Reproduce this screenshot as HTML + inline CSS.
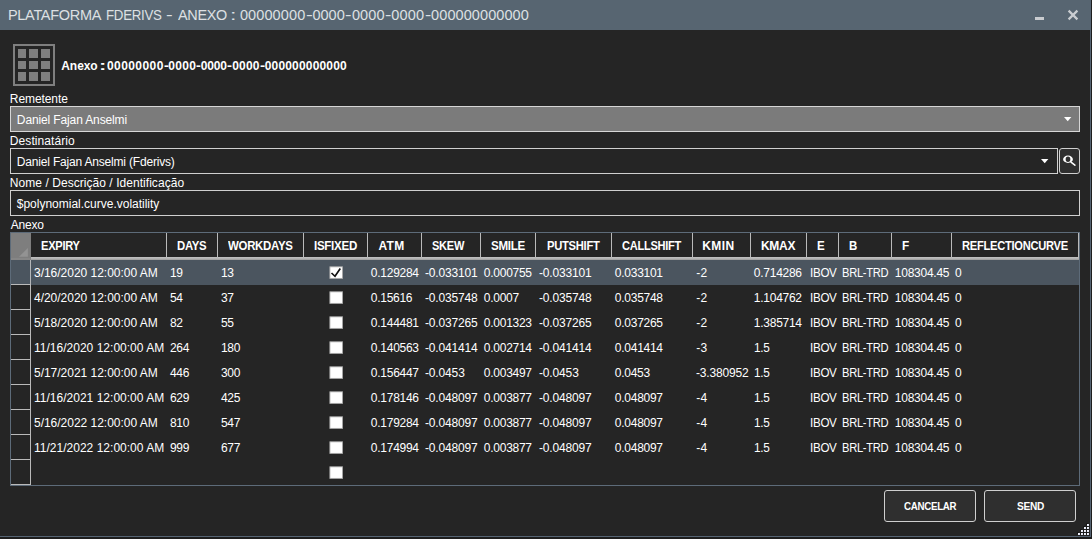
<!DOCTYPE html>
<html><head><meta charset="utf-8"><title>Plataforma FDerivs - Anexo</title>
<style>
html,body{margin:0;padding:0;background:#252525;}
body{width:1092px;height:539px;position:relative;overflow:hidden;font-family:"Liberation Sans",sans-serif;}
.t{position:absolute;white-space:pre;line-height:normal;font-family:"Liberation Sans",sans-serif;}
</style></head>
<body>
<div style="position:absolute;left:0px;top:0px;width:1092px;height:539px;background:#252525;"></div>
<div style="position:absolute;left:0px;top:0px;width:1090px;height:30px;background:#576571;"></div>
<div style="position:absolute;left:1090px;top:0px;width:1px;height:537px;background:#566473;"></div>
<div style="position:absolute;left:0px;top:536px;width:1091px;height:1px;background:#566473;"></div>
<div style="position:absolute;left:1091px;top:0px;width:1px;height:539px;background:#1e1e1e;"></div>
<div style="position:absolute;left:0px;top:537px;width:1092px;height:2px;background:#1e1e1e;"></div>
<span class="t" style="left:7.66px;top:7.00px;font-size:14.5px;letter-spacing:-0.300px;color:#dde0e3;transform:scaleX(0.9987);transform-origin:0 0;">PLATAFORMA</span>
<span class="t" style="left:106.16px;top:7.00px;font-size:14.5px;letter-spacing:-0.300px;color:#dde0e3;transform:scaleX(0.9157);transform-origin:0 0;">FDERIVS</span>
<span class="t" style="left:166.36px;top:7.00px;font-size:14.5px;letter-spacing:0.000px;color:#dde0e3;transform:scaleX(1.378);transform-origin:0 0;">-</span>
<span class="t" style="left:177.92px;top:7.00px;font-size:14.5px;letter-spacing:-0.300px;color:#dde0e3;transform:scaleX(0.9930);transform-origin:0 0;">ANEXO</span>
<span class="t" style="left:230.34px;top:7.00px;font-size:14.5px;letter-spacing:0.000px;color:#dde0e3;transform:scaleX(1.590);transform-origin:0 0;">:</span>
<span class="t" style="left:239.88px;top:7.00px;font-size:14.5px;letter-spacing:0.117px;color:#dde0e3;">00000000</span>
<span class="t" style="left:305.74px;top:7.00px;font-size:14.5px;letter-spacing:0.000px;color:#dde0e3;transform:scaleX(1.406);transform-origin:0 0;">-</span>
<span class="t" style="left:312.38px;top:7.00px;font-size:14.5px;letter-spacing:0.022px;color:#dde0e3;">0000</span>
<span class="t" style="left:345.38px;top:7.00px;font-size:14.5px;letter-spacing:0.000px;color:#dde0e3;transform:scaleX(1.350);transform-origin:0 0;">-</span>
<span class="t" style="left:351.88px;top:7.00px;font-size:14.5px;letter-spacing:0.156px;color:#dde0e3;">0000</span>
<span class="t" style="left:384.90px;top:7.00px;font-size:14.5px;letter-spacing:0.000px;color:#dde0e3;transform:scaleX(1.322);transform-origin:0 0;">-</span>
<span class="t" style="left:391.28px;top:7.00px;font-size:14.5px;letter-spacing:0.156px;color:#dde0e3;">0000</span>
<span class="t" style="left:424.62px;top:7.00px;font-size:14.5px;letter-spacing:0.000px;color:#dde0e3;transform:scaleX(1.294);transform-origin:0 0;">-</span>
<span class="t" style="left:431.08px;top:7.00px;font-size:14.5px;letter-spacing:0.087px;color:#dde0e3;">000000000000</span>
<div style="position:absolute;left:1035px;top:17px;width:9px;height:3px;background:#c9ccd0;"></div>
<svg style="position:absolute;left:1066px;top:8px" width="14" height="14" viewBox="0 0 14 14"><path d="M2.6 2.6 L11.4 11.4 M11.4 2.6 L2.6 11.4" stroke="#c9cdd1" stroke-width="2.2" fill="none"/></svg>
<div style="position:absolute;left:13px;top:44px;width:42px;height:42px;box-sizing:border-box;border:2px solid #7f7f7f;"></div>
<div style="position:absolute;left:18px;top:49px;width:8px;height:9px;background:#7f7f7f;"></div>
<div style="position:absolute;left:18px;top:61px;width:8px;height:8px;background:#7f7f7f;"></div>
<div style="position:absolute;left:18px;top:72px;width:8px;height:9px;background:#7f7f7f;"></div>
<div style="position:absolute;left:29px;top:49px;width:9px;height:9px;background:#7f7f7f;"></div>
<div style="position:absolute;left:29px;top:61px;width:9px;height:8px;background:#7f7f7f;"></div>
<div style="position:absolute;left:29px;top:72px;width:9px;height:9px;background:#7f7f7f;"></div>
<div style="position:absolute;left:41px;top:49px;width:9px;height:9px;background:#7f7f7f;"></div>
<div style="position:absolute;left:41px;top:61px;width:9px;height:8px;background:#7f7f7f;"></div>
<div style="position:absolute;left:41px;top:72px;width:9px;height:9px;background:#7f7f7f;"></div>
<span class="t" style="left:61.25px;top:59.00px;font-size:12px;letter-spacing:-0.055px;color:#fff;font-weight:bold;">Anexo</span>
<span class="t" style="left:98.83px;top:59.00px;font-size:12px;letter-spacing:0.000px;color:#fff;font-weight:bold;transform:scaleX(1.833);transform-origin:0 0;">:</span>
<span class="t" style="left:106.98px;top:59.00px;font-size:12px;letter-spacing:0.425px;color:#fff;font-weight:bold;">00000000</span>
<span class="t" style="left:163.58px;top:59.00px;font-size:12px;letter-spacing:0.000px;color:#fff;font-weight:bold;transform:scaleX(1.213);transform-origin:0 0;">-</span>
<span class="t" style="left:168.28px;top:59.00px;font-size:12px;letter-spacing:0.288px;color:#fff;font-weight:bold;">0000</span>
<span class="t" style="left:196.20px;top:59.00px;font-size:12px;letter-spacing:0.000px;color:#fff;font-weight:bold;transform:scaleX(1.180);transform-origin:0 0;">-</span>
<span class="t" style="left:200.78px;top:59.00px;font-size:12px;letter-spacing:-0.179px;color:#fff;font-weight:bold;">0000</span>
<span class="t" style="left:227.27px;top:59.00px;font-size:12px;letter-spacing:0.000px;color:#fff;font-weight:bold;transform:scaleX(1.246);transform-origin:0 0;">-</span>
<span class="t" style="left:232.18px;top:59.00px;font-size:12px;letter-spacing:0.221px;color:#fff;font-weight:bold;">0000</span>
<span class="t" style="left:259.75px;top:59.00px;font-size:12px;letter-spacing:0.000px;color:#fff;font-weight:bold;transform:scaleX(1.278);transform-origin:0 0;">-</span>
<span class="t" style="left:264.68px;top:59.00px;font-size:12px;letter-spacing:0.179px;color:#fff;font-weight:bold;">000000000000</span>
<span class="t" style="left:9.87px;top:91.50px;font-size:12px;letter-spacing:-0.086px;color:#fff;">Remetente</span>
<div style="position:absolute;left:10px;top:106px;width:1070px;height:26px;box-sizing:border-box;border:1px solid #d6d6d6;background:#7b7b7b;"></div>
<span class="t" style="left:16.87px;top:112.75px;font-size:12px;letter-spacing:-0.128px;color:#fff;">Daniel Fajan Anselmi</span>
<svg style="position:absolute;left:1064px;top:117px" width="8" height="5" viewBox="0 0 8 5"><path d="M0 0 H7.4 L3.7 4.2 Z" fill="#fff"/></svg>
<span class="t" style="left:9.87px;top:133.75px;font-size:12px;letter-spacing:0.064px;color:#fff;">Destinatário</span>
<div style="position:absolute;left:10px;top:148px;width:1048px;height:26px;box-sizing:border-box;border:1px solid #d0d0d0;background:#252525;"></div>
<span class="t" style="left:16.87px;top:155.00px;font-size:12px;letter-spacing:-0.187px;color:#fff;">Daniel Fajan Anselmi (Fderivs)</span>
<svg style="position:absolute;left:1041px;top:159px" width="8" height="5" viewBox="0 0 8 5"><path d="M0 0 H7.4 L3.7 4.2 Z" fill="#fff"/></svg>
<div style="position:absolute;left:1059px;top:148px;width:21px;height:26px;box-sizing:border-box;border:1px solid #d0d0d0;border-radius:3px;background:#2f2f2f;"></div>
<svg style="position:absolute;left:1061px;top:153px" width="18" height="18" viewBox="0 0 18 18"><path fill-rule="evenodd" fill="#fff" d="M2.1 6.25 a4.9 3.7 0 1 0 9.8 0 a4.9 3.7 0 1 0 -9.8 0 Z M4.65 6.3 a2.35 2.7 0 1 0 4.7 0 a2.35 2.7 0 1 0 -4.7 0 Z"/><path d="M10.0 9.1 L13.9 12.2" stroke="#fff" stroke-width="1.5" stroke-linecap="round"/></svg>
<span class="t" style="left:9.87px;top:176.00px;font-size:12px;letter-spacing:0.048px;color:#fff;">Nome / Descrição / Identificação</span>
<div style="position:absolute;left:10px;top:190px;width:1070px;height:26px;box-sizing:border-box;border:1px solid #d0d0d0;background:#252525;"></div>
<span class="t" style="left:16.72px;top:197.25px;font-size:12px;letter-spacing:-0.003px;color:#fff;">$polynomial.curve.volatility</span>
<span class="t" style="left:10.83px;top:218.25px;font-size:12px;letter-spacing:-0.251px;color:#fff;">Anexo</span>
<div style="position:absolute;left:10px;top:232px;width:1070px;height:254px;box-sizing:border-box;border:1px solid #5d6b79;"></div>
<div style="position:absolute;left:11px;top:233px;width:20px;height:25px;background:#7e7e7e;"></div>
<svg style="position:absolute;left:18px;top:247px" width="11" height="11" viewBox="0 0 11 11"><path d="M9.9 0.9 V9.7 H1.1 Z" fill="#939393"/></svg>
<div style="position:absolute;left:11px;top:258px;width:20px;height:2px;background:#868686;"></div>
<div style="position:absolute;left:31px;top:257px;width:1048px;height:1px;background:#bebebe;"></div>
<div style="position:absolute;left:31px;top:258px;width:1048px;height:1px;background:#b4b4b4;"></div>
<div style="position:absolute;left:31px;top:259px;width:1048px;height:1px;background:#a4a4a4;"></div>
<div style="position:absolute;left:166px;top:233px;width:1px;height:25px;background:#bababa;"></div>
<span class="t" style="left:40.61px;top:239.00px;font-size:12px;letter-spacing:-0.300px;color:#fff;font-weight:bold;transform:scaleX(0.9250);transform-origin:0 0;">EXPIRY</span>
<div style="position:absolute;left:217px;top:233px;width:1px;height:25px;background:#bababa;"></div>
<span class="t" style="left:177.09px;top:239.00px;font-size:12px;letter-spacing:-0.300px;color:#fff;font-weight:bold;transform:scaleX(0.9475);transform-origin:0 0;">DAYS</span>
<div style="position:absolute;left:303px;top:233px;width:1px;height:25px;background:#bababa;"></div>
<span class="t" style="left:228.34px;top:239.00px;font-size:12px;letter-spacing:-0.300px;color:#fff;font-weight:bold;transform:scaleX(0.9534);transform-origin:0 0;">WORKDAYS</span>
<div style="position:absolute;left:367px;top:233px;width:1px;height:25px;background:#bababa;"></div>
<span class="t" style="left:313.58px;top:239.00px;font-size:12px;letter-spacing:-0.300px;color:#fff;font-weight:bold;transform:scaleX(0.9637);transform-origin:0 0;">ISFIXED</span>
<div style="position:absolute;left:421px;top:233px;width:1px;height:25px;background:#bababa;"></div>
<span class="t" style="left:378.55px;top:239.00px;font-size:12px;letter-spacing:0.246px;color:#fff;font-weight:bold;">ATM</span>
<div style="position:absolute;left:480px;top:233px;width:1px;height:25px;background:#bababa;"></div>
<span class="t" style="left:432.03px;top:239.00px;font-size:12px;letter-spacing:-0.300px;color:#fff;font-weight:bold;transform:scaleX(0.9211);transform-origin:0 0;">SKEW</span>
<div style="position:absolute;left:535px;top:233px;width:1px;height:25px;background:#bababa;"></div>
<span class="t" style="left:490.52px;top:239.00px;font-size:12px;letter-spacing:-0.300px;color:#fff;font-weight:bold;transform:scaleX(0.9666);transform-origin:0 0;">SMILE</span>
<div style="position:absolute;left:611px;top:233px;width:1px;height:25px;background:#bababa;"></div>
<span class="t" style="left:546.60px;top:239.00px;font-size:12px;letter-spacing:-0.300px;color:#fff;font-weight:bold;transform:scaleX(0.9346);transform-origin:0 0;">PUTSHIFT</span>
<div style="position:absolute;left:692px;top:233px;width:1px;height:25px;background:#bababa;"></div>
<span class="t" style="left:621.65px;top:239.00px;font-size:12px;letter-spacing:-0.300px;color:#fff;font-weight:bold;transform:scaleX(0.9232);transform-origin:0 0;">CALLSHIFT</span>
<div style="position:absolute;left:750px;top:233px;width:1px;height:25px;background:#bababa;"></div>
<span class="t" style="left:702.30px;top:239.00px;font-size:12px;letter-spacing:0.396px;color:#fff;font-weight:bold;">KMIN</span>
<div style="position:absolute;left:806px;top:233px;width:1px;height:25px;background:#bababa;"></div>
<span class="t" style="left:761.05px;top:239.00px;font-size:12px;letter-spacing:-0.300px;color:#fff;font-weight:bold;transform:scaleX(0.9989);transform-origin:0 0;">KMAX</span>
<div style="position:absolute;left:838px;top:233px;width:1px;height:25px;background:#bababa;"></div>
<span class="t" style="left:816.58px;top:239.00px;font-size:12px;letter-spacing:0.000px;color:#fff;font-weight:bold;transform:scaleX(0.964);transform-origin:0 0;">E</span>
<div style="position:absolute;left:891px;top:233px;width:1px;height:25px;background:#bababa;"></div>
<span class="t" style="left:849.08px;top:239.00px;font-size:12px;letter-spacing:0.000px;color:#fff;font-weight:bold;transform:scaleX(0.956);transform-origin:0 0;">B</span>
<div style="position:absolute;left:951px;top:233px;width:1px;height:25px;background:#bababa;"></div>
<span class="t" style="left:901.56px;top:239.00px;font-size:12px;letter-spacing:0.000px;color:#fff;font-weight:bold;transform:scaleX(0.983);transform-origin:0 0;">F</span>
<div style="position:absolute;left:1078px;top:233px;width:1px;height:25px;background:#bababa;"></div>
<span class="t" style="left:961.60px;top:239.00px;font-size:12px;letter-spacing:-0.300px;color:#fff;font-weight:bold;transform:scaleX(0.9294);transform-origin:0 0;">REFLECTIONCURVE</span>
<div style="position:absolute;left:11px;top:260px;width:1068px;height:25px;background:#4b555f;"></div>
<div style="position:absolute;left:30px;top:260px;width:1px;height:25px;background:#b4b6b8;"></div>
<div style="position:absolute;left:11px;top:284px;width:20px;height:1px;background:#bababa;"></div>
<svg style="position:absolute;left:328px;top:264px" width="17" height="17" viewBox="0 0 17 17"><rect x="1.9" y="2.8" width="12.6" height="11.6" fill="#fff" stroke="#a8a8a8" stroke-width="0.9"/><path d="M3.5 9 L7 12.3 L12.3 4.5" stroke="#111" stroke-width="1.7" fill="none"/></svg>
<span class="t" style="left:33.99px;top:266.00px;font-size:12px;letter-spacing:-0.018px;color:#fff;">3/16/2020 12:00:00 AM</span>
<span class="t" style="left:169.89px;top:266.00px;font-size:12px;letter-spacing:-0.211px;color:#fff;">19</span>
<span class="t" style="left:220.89px;top:266.00px;font-size:12px;letter-spacing:-0.211px;color:#fff;">13</span>
<span class="t" style="left:370.86px;top:266.00px;font-size:12px;letter-spacing:-0.272px;color:#fff;">0.129284</span>
<span class="t" style="left:424.92px;top:266.00px;font-size:12px;letter-spacing:-0.152px;color:#fff;">-0.033101</span>
<span class="t" style="left:483.86px;top:266.00px;font-size:12px;letter-spacing:-0.272px;color:#fff;">0.000755</span>
<span class="t" style="left:538.92px;top:266.00px;font-size:12px;letter-spacing:-0.152px;color:#fff;">-0.033101</span>
<span class="t" style="left:614.86px;top:266.00px;font-size:12px;letter-spacing:-0.272px;color:#fff;">0.033101</span>
<span class="t" style="left:696.15px;top:266.00px;font-size:12px;letter-spacing:0.298px;color:#fff;">-2</span>
<span class="t" style="left:753.86px;top:266.00px;font-size:12px;letter-spacing:-0.272px;color:#fff;">0.714286</span>
<span class="t" style="left:809.85px;top:266.00px;font-size:12px;letter-spacing:-0.300px;color:#fff;transform:scaleX(0.9671);transform-origin:0 0;">IBOV</span>
<span class="t" style="left:841.85px;top:266.00px;font-size:12px;letter-spacing:-0.300px;color:#fff;transform:scaleX(0.9292);transform-origin:0 0;">BRL-TRD</span>
<span class="t" style="left:894.87px;top:266.00px;font-size:12px;letter-spacing:-0.265px;color:#fff;">108304.45</span>
<span class="t" style="left:954.89px;top:266.00px;font-size:12px;letter-spacing:-0.219px;color:#fff;">0</span>
<div style="position:absolute;left:30px;top:285px;width:1px;height:25px;background:#bababa;"></div>
<div style="position:absolute;left:11px;top:309px;width:20px;height:1px;background:#bababa;"></div>
<svg style="position:absolute;left:328px;top:289px" width="17" height="17" viewBox="0 0 17 17"><rect x="1.9" y="2.8" width="12.6" height="11.6" fill="#fff" stroke="#a8a8a8" stroke-width="0.9"/></svg>
<span class="t" style="left:33.99px;top:291.00px;font-size:12px;letter-spacing:-0.018px;color:#fff;">4/20/2020 12:00:00 AM</span>
<span class="t" style="left:169.89px;top:291.00px;font-size:12px;letter-spacing:-0.211px;color:#fff;">54</span>
<span class="t" style="left:220.89px;top:291.00px;font-size:12px;letter-spacing:-0.211px;color:#fff;">37</span>
<span class="t" style="left:370.86px;top:291.00px;font-size:12px;letter-spacing:-0.282px;color:#fff;">0.15616</span>
<span class="t" style="left:424.92px;top:291.00px;font-size:12px;letter-spacing:-0.152px;color:#fff;">-0.035748</span>
<span class="t" style="left:483.85px;top:291.00px;font-size:12px;letter-spacing:-0.293px;color:#fff;">0.0007</span>
<span class="t" style="left:538.92px;top:291.00px;font-size:12px;letter-spacing:-0.152px;color:#fff;">-0.035748</span>
<span class="t" style="left:614.86px;top:291.00px;font-size:12px;letter-spacing:-0.272px;color:#fff;">0.035748</span>
<span class="t" style="left:696.15px;top:291.00px;font-size:12px;letter-spacing:0.298px;color:#fff;">-2</span>
<span class="t" style="left:753.86px;top:291.00px;font-size:12px;letter-spacing:-0.272px;color:#fff;">1.104762</span>
<span class="t" style="left:809.85px;top:291.00px;font-size:12px;letter-spacing:-0.300px;color:#fff;transform:scaleX(0.9671);transform-origin:0 0;">IBOV</span>
<span class="t" style="left:841.85px;top:291.00px;font-size:12px;letter-spacing:-0.300px;color:#fff;transform:scaleX(0.9292);transform-origin:0 0;">BRL-TRD</span>
<span class="t" style="left:894.87px;top:291.00px;font-size:12px;letter-spacing:-0.265px;color:#fff;">108304.45</span>
<span class="t" style="left:954.89px;top:291.00px;font-size:12px;letter-spacing:-0.219px;color:#fff;">0</span>
<div style="position:absolute;left:30px;top:310px;width:1px;height:25px;background:#bababa;"></div>
<div style="position:absolute;left:11px;top:334px;width:20px;height:1px;background:#bababa;"></div>
<svg style="position:absolute;left:328px;top:314px" width="17" height="17" viewBox="0 0 17 17"><rect x="1.9" y="2.8" width="12.6" height="11.6" fill="#fff" stroke="#a8a8a8" stroke-width="0.9"/></svg>
<span class="t" style="left:33.99px;top:316.00px;font-size:12px;letter-spacing:-0.018px;color:#fff;">5/18/2020 12:00:00 AM</span>
<span class="t" style="left:169.89px;top:316.00px;font-size:12px;letter-spacing:-0.211px;color:#fff;">82</span>
<span class="t" style="left:220.89px;top:316.00px;font-size:12px;letter-spacing:-0.211px;color:#fff;">55</span>
<span class="t" style="left:370.86px;top:316.00px;font-size:12px;letter-spacing:-0.272px;color:#fff;">0.144481</span>
<span class="t" style="left:424.92px;top:316.00px;font-size:12px;letter-spacing:-0.152px;color:#fff;">-0.037265</span>
<span class="t" style="left:483.86px;top:316.00px;font-size:12px;letter-spacing:-0.272px;color:#fff;">0.001323</span>
<span class="t" style="left:538.92px;top:316.00px;font-size:12px;letter-spacing:-0.152px;color:#fff;">-0.037265</span>
<span class="t" style="left:614.86px;top:316.00px;font-size:12px;letter-spacing:-0.272px;color:#fff;">0.037265</span>
<span class="t" style="left:696.15px;top:316.00px;font-size:12px;letter-spacing:0.298px;color:#fff;">-2</span>
<span class="t" style="left:753.86px;top:316.00px;font-size:12px;letter-spacing:-0.272px;color:#fff;">1.385714</span>
<span class="t" style="left:809.85px;top:316.00px;font-size:12px;letter-spacing:-0.300px;color:#fff;transform:scaleX(0.9671);transform-origin:0 0;">IBOV</span>
<span class="t" style="left:841.85px;top:316.00px;font-size:12px;letter-spacing:-0.300px;color:#fff;transform:scaleX(0.9292);transform-origin:0 0;">BRL-TRD</span>
<span class="t" style="left:894.87px;top:316.00px;font-size:12px;letter-spacing:-0.265px;color:#fff;">108304.45</span>
<span class="t" style="left:954.89px;top:316.00px;font-size:12px;letter-spacing:-0.219px;color:#fff;">0</span>
<div style="position:absolute;left:30px;top:335px;width:1px;height:25px;background:#bababa;"></div>
<div style="position:absolute;left:11px;top:359px;width:20px;height:1px;background:#bababa;"></div>
<svg style="position:absolute;left:328px;top:339px" width="17" height="17" viewBox="0 0 17 17"><rect x="1.9" y="2.8" width="12.6" height="11.6" fill="#fff" stroke="#a8a8a8" stroke-width="0.9"/></svg>
<span class="t" style="left:34.01px;top:341.00px;font-size:12px;letter-spacing:0.014px;color:#fff;">11/16/2020 12:00:00 AM</span>
<span class="t" style="left:169.90px;top:341.00px;font-size:12px;letter-spacing:-0.208px;color:#fff;">264</span>
<span class="t" style="left:220.90px;top:341.00px;font-size:12px;letter-spacing:-0.208px;color:#fff;">180</span>
<span class="t" style="left:370.86px;top:341.00px;font-size:12px;letter-spacing:-0.272px;color:#fff;">0.140563</span>
<span class="t" style="left:424.92px;top:341.00px;font-size:12px;letter-spacing:-0.152px;color:#fff;">-0.041414</span>
<span class="t" style="left:483.86px;top:341.00px;font-size:12px;letter-spacing:-0.272px;color:#fff;">0.002714</span>
<span class="t" style="left:538.92px;top:341.00px;font-size:12px;letter-spacing:-0.152px;color:#fff;">-0.041414</span>
<span class="t" style="left:614.86px;top:341.00px;font-size:12px;letter-spacing:-0.272px;color:#fff;">0.041414</span>
<span class="t" style="left:696.15px;top:341.00px;font-size:12px;letter-spacing:0.298px;color:#fff;">-3</span>
<span class="t" style="left:753.85px;top:341.00px;font-size:12px;letter-spacing:-0.300px;color:#fff;transform:scaleX(0.9843);transform-origin:0 0;">1.5</span>
<span class="t" style="left:809.85px;top:341.00px;font-size:12px;letter-spacing:-0.300px;color:#fff;transform:scaleX(0.9671);transform-origin:0 0;">IBOV</span>
<span class="t" style="left:841.85px;top:341.00px;font-size:12px;letter-spacing:-0.300px;color:#fff;transform:scaleX(0.9292);transform-origin:0 0;">BRL-TRD</span>
<span class="t" style="left:894.87px;top:341.00px;font-size:12px;letter-spacing:-0.265px;color:#fff;">108304.45</span>
<span class="t" style="left:954.89px;top:341.00px;font-size:12px;letter-spacing:-0.219px;color:#fff;">0</span>
<div style="position:absolute;left:30px;top:360px;width:1px;height:25px;background:#bababa;"></div>
<div style="position:absolute;left:11px;top:384px;width:20px;height:1px;background:#bababa;"></div>
<svg style="position:absolute;left:328px;top:364px" width="17" height="17" viewBox="0 0 17 17"><rect x="1.9" y="2.8" width="12.6" height="11.6" fill="#fff" stroke="#a8a8a8" stroke-width="0.9"/></svg>
<span class="t" style="left:33.99px;top:366.00px;font-size:12px;letter-spacing:-0.018px;color:#fff;">5/17/2021 12:00:00 AM</span>
<span class="t" style="left:169.90px;top:366.00px;font-size:12px;letter-spacing:-0.208px;color:#fff;">446</span>
<span class="t" style="left:220.90px;top:366.00px;font-size:12px;letter-spacing:-0.208px;color:#fff;">300</span>
<span class="t" style="left:370.86px;top:366.00px;font-size:12px;letter-spacing:-0.272px;color:#fff;">0.156447</span>
<span class="t" style="left:424.93px;top:366.00px;font-size:12px;letter-spacing:-0.137px;color:#fff;">-0.0453</span>
<span class="t" style="left:483.86px;top:366.00px;font-size:12px;letter-spacing:-0.272px;color:#fff;">0.003497</span>
<span class="t" style="left:538.93px;top:366.00px;font-size:12px;letter-spacing:-0.137px;color:#fff;">-0.0453</span>
<span class="t" style="left:614.85px;top:366.00px;font-size:12px;letter-spacing:-0.293px;color:#fff;">0.0453</span>
<span class="t" style="left:695.92px;top:366.00px;font-size:12px;letter-spacing:-0.152px;color:#fff;">-3.380952</span>
<span class="t" style="left:753.85px;top:366.00px;font-size:12px;letter-spacing:-0.300px;color:#fff;transform:scaleX(0.9843);transform-origin:0 0;">1.5</span>
<span class="t" style="left:809.85px;top:366.00px;font-size:12px;letter-spacing:-0.300px;color:#fff;transform:scaleX(0.9671);transform-origin:0 0;">IBOV</span>
<span class="t" style="left:841.85px;top:366.00px;font-size:12px;letter-spacing:-0.300px;color:#fff;transform:scaleX(0.9292);transform-origin:0 0;">BRL-TRD</span>
<span class="t" style="left:894.87px;top:366.00px;font-size:12px;letter-spacing:-0.265px;color:#fff;">108304.45</span>
<span class="t" style="left:954.89px;top:366.00px;font-size:12px;letter-spacing:-0.219px;color:#fff;">0</span>
<div style="position:absolute;left:30px;top:385px;width:1px;height:25px;background:#bababa;"></div>
<div style="position:absolute;left:11px;top:409px;width:20px;height:1px;background:#bababa;"></div>
<svg style="position:absolute;left:328px;top:389px" width="17" height="17" viewBox="0 0 17 17"><rect x="1.9" y="2.8" width="12.6" height="11.6" fill="#fff" stroke="#a8a8a8" stroke-width="0.9"/></svg>
<span class="t" style="left:34.01px;top:391.00px;font-size:12px;letter-spacing:0.014px;color:#fff;">11/16/2021 12:00:00 AM</span>
<span class="t" style="left:169.90px;top:391.00px;font-size:12px;letter-spacing:-0.208px;color:#fff;">629</span>
<span class="t" style="left:220.90px;top:391.00px;font-size:12px;letter-spacing:-0.208px;color:#fff;">425</span>
<span class="t" style="left:370.86px;top:391.00px;font-size:12px;letter-spacing:-0.272px;color:#fff;">0.178146</span>
<span class="t" style="left:424.92px;top:391.00px;font-size:12px;letter-spacing:-0.152px;color:#fff;">-0.048097</span>
<span class="t" style="left:483.86px;top:391.00px;font-size:12px;letter-spacing:-0.272px;color:#fff;">0.003877</span>
<span class="t" style="left:538.92px;top:391.00px;font-size:12px;letter-spacing:-0.152px;color:#fff;">-0.048097</span>
<span class="t" style="left:614.86px;top:391.00px;font-size:12px;letter-spacing:-0.272px;color:#fff;">0.048097</span>
<span class="t" style="left:696.15px;top:391.00px;font-size:12px;letter-spacing:0.298px;color:#fff;">-4</span>
<span class="t" style="left:753.85px;top:391.00px;font-size:12px;letter-spacing:-0.300px;color:#fff;transform:scaleX(0.9843);transform-origin:0 0;">1.5</span>
<span class="t" style="left:809.85px;top:391.00px;font-size:12px;letter-spacing:-0.300px;color:#fff;transform:scaleX(0.9671);transform-origin:0 0;">IBOV</span>
<span class="t" style="left:841.85px;top:391.00px;font-size:12px;letter-spacing:-0.300px;color:#fff;transform:scaleX(0.9292);transform-origin:0 0;">BRL-TRD</span>
<span class="t" style="left:894.87px;top:391.00px;font-size:12px;letter-spacing:-0.265px;color:#fff;">108304.45</span>
<span class="t" style="left:954.89px;top:391.00px;font-size:12px;letter-spacing:-0.219px;color:#fff;">0</span>
<div style="position:absolute;left:30px;top:410px;width:1px;height:25px;background:#bababa;"></div>
<div style="position:absolute;left:11px;top:434px;width:20px;height:1px;background:#bababa;"></div>
<svg style="position:absolute;left:328px;top:414px" width="17" height="17" viewBox="0 0 17 17"><rect x="1.9" y="2.8" width="12.6" height="11.6" fill="#fff" stroke="#a8a8a8" stroke-width="0.9"/></svg>
<span class="t" style="left:33.99px;top:416.00px;font-size:12px;letter-spacing:-0.018px;color:#fff;">5/16/2022 12:00:00 AM</span>
<span class="t" style="left:169.90px;top:416.00px;font-size:12px;letter-spacing:-0.208px;color:#fff;">810</span>
<span class="t" style="left:220.90px;top:416.00px;font-size:12px;letter-spacing:-0.208px;color:#fff;">547</span>
<span class="t" style="left:370.86px;top:416.00px;font-size:12px;letter-spacing:-0.272px;color:#fff;">0.179284</span>
<span class="t" style="left:424.92px;top:416.00px;font-size:12px;letter-spacing:-0.152px;color:#fff;">-0.048097</span>
<span class="t" style="left:483.86px;top:416.00px;font-size:12px;letter-spacing:-0.272px;color:#fff;">0.003877</span>
<span class="t" style="left:538.92px;top:416.00px;font-size:12px;letter-spacing:-0.152px;color:#fff;">-0.048097</span>
<span class="t" style="left:614.86px;top:416.00px;font-size:12px;letter-spacing:-0.272px;color:#fff;">0.048097</span>
<span class="t" style="left:696.15px;top:416.00px;font-size:12px;letter-spacing:0.298px;color:#fff;">-4</span>
<span class="t" style="left:753.85px;top:416.00px;font-size:12px;letter-spacing:-0.300px;color:#fff;transform:scaleX(0.9843);transform-origin:0 0;">1.5</span>
<span class="t" style="left:809.85px;top:416.00px;font-size:12px;letter-spacing:-0.300px;color:#fff;transform:scaleX(0.9671);transform-origin:0 0;">IBOV</span>
<span class="t" style="left:841.85px;top:416.00px;font-size:12px;letter-spacing:-0.300px;color:#fff;transform:scaleX(0.9292);transform-origin:0 0;">BRL-TRD</span>
<span class="t" style="left:894.87px;top:416.00px;font-size:12px;letter-spacing:-0.265px;color:#fff;">108304.45</span>
<span class="t" style="left:954.89px;top:416.00px;font-size:12px;letter-spacing:-0.219px;color:#fff;">0</span>
<div style="position:absolute;left:30px;top:435px;width:1px;height:25px;background:#bababa;"></div>
<div style="position:absolute;left:11px;top:459px;width:20px;height:1px;background:#bababa;"></div>
<svg style="position:absolute;left:328px;top:439px" width="17" height="17" viewBox="0 0 17 17"><rect x="1.9" y="2.8" width="12.6" height="11.6" fill="#fff" stroke="#a8a8a8" stroke-width="0.9"/></svg>
<span class="t" style="left:34.01px;top:441.00px;font-size:12px;letter-spacing:0.014px;color:#fff;">11/21/2022 12:00:00 AM</span>
<span class="t" style="left:169.90px;top:441.00px;font-size:12px;letter-spacing:-0.208px;color:#fff;">999</span>
<span class="t" style="left:220.90px;top:441.00px;font-size:12px;letter-spacing:-0.208px;color:#fff;">677</span>
<span class="t" style="left:370.86px;top:441.00px;font-size:12px;letter-spacing:-0.272px;color:#fff;">0.174994</span>
<span class="t" style="left:424.92px;top:441.00px;font-size:12px;letter-spacing:-0.152px;color:#fff;">-0.048097</span>
<span class="t" style="left:483.86px;top:441.00px;font-size:12px;letter-spacing:-0.272px;color:#fff;">0.003877</span>
<span class="t" style="left:538.92px;top:441.00px;font-size:12px;letter-spacing:-0.152px;color:#fff;">-0.048097</span>
<span class="t" style="left:614.86px;top:441.00px;font-size:12px;letter-spacing:-0.272px;color:#fff;">0.048097</span>
<span class="t" style="left:696.15px;top:441.00px;font-size:12px;letter-spacing:0.298px;color:#fff;">-4</span>
<span class="t" style="left:753.85px;top:441.00px;font-size:12px;letter-spacing:-0.300px;color:#fff;transform:scaleX(0.9843);transform-origin:0 0;">1.5</span>
<span class="t" style="left:809.85px;top:441.00px;font-size:12px;letter-spacing:-0.300px;color:#fff;transform:scaleX(0.9671);transform-origin:0 0;">IBOV</span>
<span class="t" style="left:841.85px;top:441.00px;font-size:12px;letter-spacing:-0.300px;color:#fff;transform:scaleX(0.9292);transform-origin:0 0;">BRL-TRD</span>
<span class="t" style="left:894.87px;top:441.00px;font-size:12px;letter-spacing:-0.265px;color:#fff;">108304.45</span>
<span class="t" style="left:954.89px;top:441.00px;font-size:12px;letter-spacing:-0.219px;color:#fff;">0</span>
<div style="position:absolute;left:30px;top:460px;width:1px;height:25px;background:#bababa;"></div>
<div style="position:absolute;left:11px;top:484px;width:20px;height:1px;background:#bababa;"></div>
<svg style="position:absolute;left:328px;top:464px" width="17" height="17" viewBox="0 0 17 17"><rect x="1.9" y="2.8" width="12.6" height="11.6" fill="#fff" stroke="#a8a8a8" stroke-width="0.9"/></svg>
<div style="position:absolute;left:884px;top:490px;width:92px;height:32px;box-sizing:border-box;border:1px solid #cfcfcf;border-radius:3px;background:#2f2f2f;"></div>
<div style="position:absolute;left:984px;top:490px;width:92px;height:32px;box-sizing:border-box;border:1px solid #cfcfcf;border-radius:3px;background:#2f2f2f;"></div>
<span class="t" style="left:904.15px;top:501.30px;font-size:10.2px;letter-spacing:-0.300px;color:#fff;font-weight:bold;transform:scaleX(0.9551);transform-origin:0 0;">CANCELAR</span>
<span class="t" style="left:1016.66px;top:501.30px;font-size:10.2px;letter-spacing:-0.300px;color:#fff;font-weight:bold;transform:scaleX(0.9966);transform-origin:0 0;">SEND</span>
<div style="position:absolute;left:1086px;top:523px;width:2px;height:2px;background:#181818;"></div>
<div style="position:absolute;left:1083px;top:526px;width:2px;height:2px;background:#181818;"></div>
<div style="position:absolute;left:1086px;top:526px;width:2px;height:2px;background:#181818;"></div>
<div style="position:absolute;left:1080px;top:529px;width:2px;height:2px;background:#181818;"></div>
<div style="position:absolute;left:1083px;top:529px;width:2px;height:2px;background:#181818;"></div>
<div style="position:absolute;left:1086px;top:529px;width:2px;height:2px;background:#181818;"></div>
<div style="position:absolute;left:1077px;top:532px;width:2px;height:2px;background:#181818;"></div>
<div style="position:absolute;left:1080px;top:532px;width:2px;height:2px;background:#181818;"></div>
<div style="position:absolute;left:1083px;top:532px;width:2px;height:2px;background:#181818;"></div>
<div style="position:absolute;left:1086px;top:532px;width:2px;height:2px;background:#181818;"></div>
<div style="position:absolute;left:1087px;top:524px;width:2px;height:2px;background:linear-gradient(135deg,#ffffff,#d4daf0);"></div>
<div style="position:absolute;left:1084px;top:527px;width:2px;height:2px;background:linear-gradient(135deg,#ffffff,#d4daf0);"></div>
<div style="position:absolute;left:1087px;top:527px;width:2px;height:2px;background:linear-gradient(135deg,#ffffff,#d4daf0);"></div>
<div style="position:absolute;left:1081px;top:530px;width:2px;height:2px;background:linear-gradient(135deg,#ffffff,#d4daf0);"></div>
<div style="position:absolute;left:1084px;top:530px;width:2px;height:2px;background:linear-gradient(135deg,#ffffff,#d4daf0);"></div>
<div style="position:absolute;left:1087px;top:530px;width:2px;height:2px;background:linear-gradient(135deg,#ffffff,#d4daf0);"></div>
<div style="position:absolute;left:1078px;top:533px;width:2px;height:2px;background:linear-gradient(135deg,#ffffff,#d4daf0);"></div>
<div style="position:absolute;left:1081px;top:533px;width:2px;height:2px;background:linear-gradient(135deg,#ffffff,#d4daf0);"></div>
<div style="position:absolute;left:1084px;top:533px;width:2px;height:2px;background:linear-gradient(135deg,#ffffff,#d4daf0);"></div>
<div style="position:absolute;left:1087px;top:533px;width:2px;height:2px;background:linear-gradient(135deg,#ffffff,#d4daf0);"></div>
</body></html>
